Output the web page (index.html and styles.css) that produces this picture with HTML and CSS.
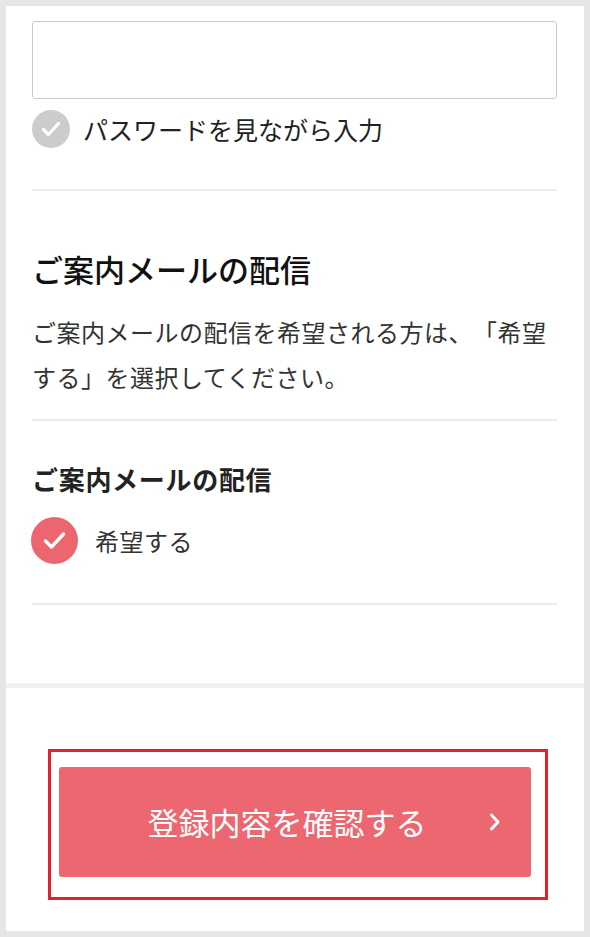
FILE: index.html
```html
<!DOCTYPE html>
<html lang="ja">
<head>
<meta charset="utf-8">
<title>会員登録</title>
<link rel="stylesheet" href="styles.css">
</head>
<body>
<div class="page">
  <div class="form">
    <div class="input-box"></div>
    <div class="check-row">
      <span class="check check-gray">
        <svg viewBox="0 0 38 38" width="38" height="38"><path d="M11.5 19.5 L16.5 24.5 L26.5 13.5" fill="none" stroke="#fff" stroke-width="3.2" stroke-linecap="round" stroke-linejoin="round"/></svg>
      </span>
      <span class="check-label">パスワードを見ながら入力</span>
    </div>
    <div class="divider divider-first"></div>
    <h2 class="section-title">ご案内メールの配信</h2>
    <p class="section-text">ご案内メールの配信を希望される方は、「希望する」を選択してください。</p>
    <div class="divider"></div>
    <h3 class="field-title">ご案内メールの配信</h3>
    <div class="check-row check-row-red">
      <span class="check check-red">
        <svg viewBox="0 0 47 47" width="47" height="47"><path d="M14.5 24 L20.5 30 L32.5 17" fill="none" stroke="#fff" stroke-width="3.4" stroke-linecap="round" stroke-linejoin="round"/></svg>
      </span>
      <span class="check-label check-label-red">希望する</span>
    </div>
    <div class="divider divider-last"></div>
  </div>
  <div class="band"></div>
  <div class="footer">
    <div class="highlight">
      <div class="btn">
        <span class="btn-text">登録内容を確認する</span>
        <svg class="chev" viewBox="0 0 12 18" width="12" height="18"><path d="M2.5 2 L9 9 L2.5 16" fill="none" stroke="#fff" stroke-width="3" stroke-linecap="round" stroke-linejoin="round"/></svg>
      </div>
    </div>
  </div>
</div>
</body>
</html>
```

FILE: styles.css
```css
* { box-sizing: border-box; }
html, body { margin: 0; padding: 0; }
body {
  background: #e6e6e6;
  padding: 6px 6px 7px;
  font-family: "Noto Sans CJK JP", "Noto Sans", sans-serif;
  color: #222;
}
.page {
  background: #fff;
  width: 578px;
}
.form {
  padding: 15px 27px 0 26px;
}
.input-box {
  height: 78px;
  border: 1px solid #c8c8c8;
  border-radius: 3px;
  background: #fff;
}
.check-row {
  display: flex;
  align-items: center;
  margin-top: 11px;
  height: 38px;
}
.check {
  flex: none;
  display: flex;
  align-items: center;
  justify-content: center;
  border-radius: 50%;
}
.check-gray {
  width: 38px;
  height: 38px;
  background: #cccccc;
}
.check-red {
  width: 47px;
  height: 47px;
  background: #ec6670;
  margin-left: -1px;
}
.check-label {
  margin-left: 13px;
  font-size: 25px;
  line-height: 34px;
  color: #222;
}
.check-row-red {
  margin-top: 19px;
  height: 47px;
}
.check-label-red {
  margin-left: 17px;
  font-size: 24px;
  line-height: 38px;
  letter-spacing: 0.5px;
  color: #333;
}
.divider {
  height: 2px;
  background: #ebebeb;
}
.divider-first { margin-top: 41px; }
.section-title {
  margin: 56px 0 0;
  font-size: 31px;
  line-height: 44px;
  font-weight: 500;
  color: #111;
}
.section-text {
  margin: 18px 0 0;
  font-size: 24px;
  letter-spacing: 0.5px;
  line-height: 45px;
  color: #333;
  text-spacing-trim: space-all;
}
.section-text + .divider { margin-top: 20px; }
.field-title {
  margin: 39px 0 0;
  font-size: 26px;
  letter-spacing: 0.7px;
  line-height: 38px;
  font-weight: 700;
  color: #222;
}
.divider-last { margin-top: 39px; }
.band {
  margin-top: 78px;
  height: 5px;
  background: #f0f0f0;
}
.footer {
  padding: 61px 36px 31px 42px;
}
.highlight {
  border: 3px solid #e4202d;
  padding: 15px 14px 20px 8px;
}
.btn {
  position: relative;
  height: 110px;
  background: #ed6770;
  border-radius: 3px;
  display: flex;
  align-items: center;
  justify-content: center;
  padding-right: 16px;
}
.btn-text {
  color: #fff;
  font-size: 31px;
  line-height: 40px;
}
.chev {
  position: absolute;
  right: 30px;
  top: 46px;
}
```
